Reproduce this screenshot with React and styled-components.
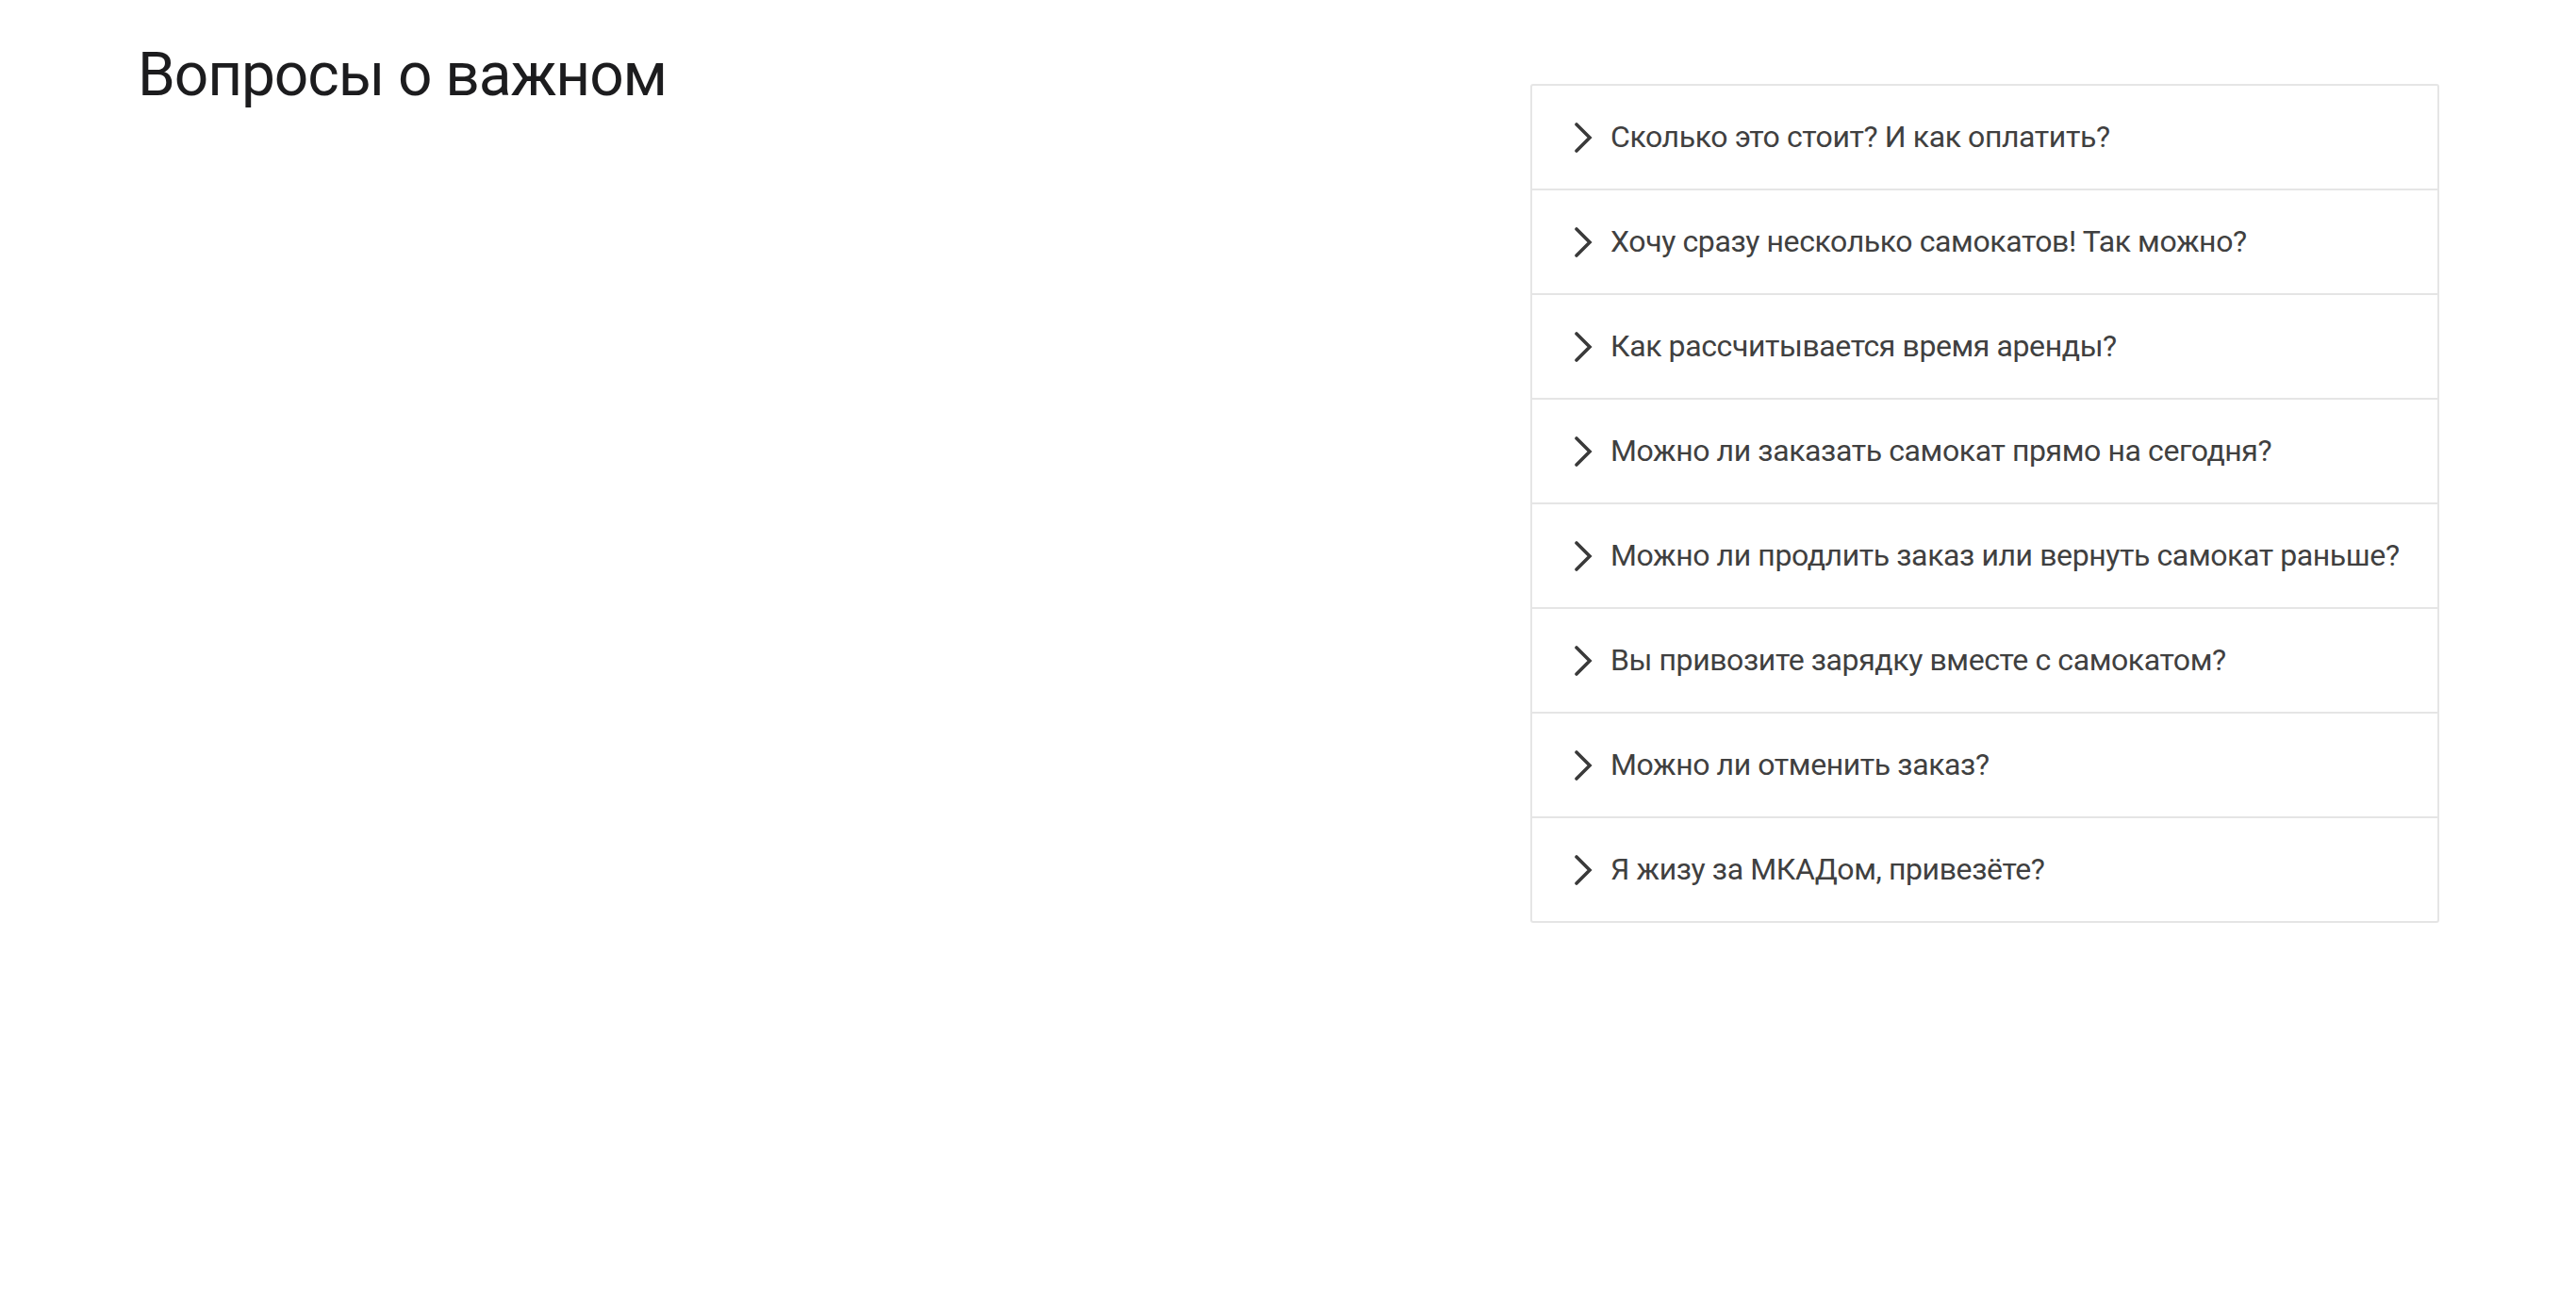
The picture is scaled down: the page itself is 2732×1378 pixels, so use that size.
import React from "react";
import styled, { createGlobalStyle } from "styled-components";

const GlobalStyle = createGlobalStyle`
  html, body {
    margin: 0;
    padding: 0;
    background: #ffffff;
  }
  body {
    font-family: Roboto, "Noto Sans", "Liberation Sans", sans-serif;
  }
`;

const QUESTIONS = [
  "Сколько это стоит? И как оплатить?",
  "Хочу сразу несколько самокатов! Так можно?",
  "Как рассчитывается время аренды?",
  "Можно ли заказать самокат прямо на сегодня?",
  "Можно ли продлить заказ или вернуть самокат раньше?",
  "Вы привозите зарядку вместе с самокатом?",
  "Можно ли отменить заказ?",
  "Я жизу за МКАДом, привезёте?",
];

const Chevron = () => (
  <svg width="20" height="32" viewBox="0 0 20 32" fill="none">
    <polyline
      points="3,2 17,16 3,30"
      stroke="#3a3a3a"
      strokeWidth="3.6"
      strokeLinecap="round"
      strokeLinejoin="miter"
    />
  </svg>
);

const App = () => {
  return (
    <>
      <GlobalStyle />
      <Page>
        <Title>Вопросы о важном</Title>
        <Accordion>
          {QUESTIONS.map((q) => (
            <Item key={q}>
              <Chevron />
              <Question>{q}</Question>
            </Item>
          ))}
        </Accordion>
      </Page>
    </>
  );
};

const Page = styled.main`
  display: flex;
  justify-content: space-between;
  align-items: flex-start;
  padding: 0 145px 0 146px;
  min-height: 1378px;
  box-sizing: border-box;
`;

const Title = styled.h2`
  margin: 48px 0 0;
  font-size: 64px;
  font-weight: 400;
  letter-spacing: -1.1px;
  line-height: 1;
  color: #1c1c1e;
`;

const Accordion = styled.section`
  margin-top: 89px;
  width: 964px;
  box-sizing: border-box;
  border: 2px solid #e5e5e5;
  border-radius: 3px;
`;

const Item = styled.div`
  display: flex;
  align-items: center;
  gap: 19px;
  height: 111px;
  box-sizing: border-box;
  padding: 0 16px 0 44px;
  border-bottom: 2px solid #e5e5e5;

  &:last-child {
    border-bottom: none;
    height: 109px;
  }
`;

const Question = styled.span`
  font-size: 32px;
  letter-spacing: -0.4px;
  white-space: nowrap;
  color: #404040;
  line-height: 1.2;
`;

export default App;
